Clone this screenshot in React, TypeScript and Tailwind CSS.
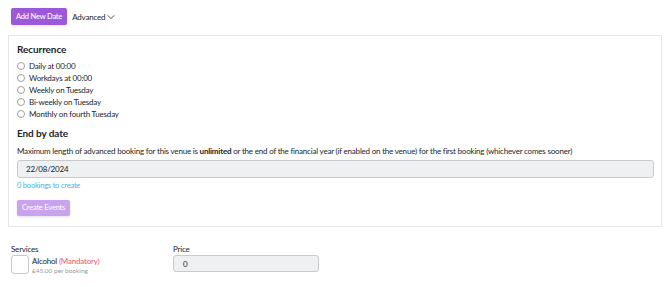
import React from "react";

const options = [
  "Daily at 00:00",
  "Workdays at 00:00",
  "Weekly on Tuesday",
  "Bi-weekly on Tuesday",
  "Monthly on fourth Tuesday",
];

export default function App() {
  return (
    <div className="w-[670px] h-[287px] bg-white text-[#212529] text-[8px] tracking-[-0.2px] overflow-hidden" style={{ fontFamily: "Lato, 'Liberation Sans', sans-serif" }}>
      {/* top bar */}
      <div className="flex items-center gap-[5px] pl-[11px] pt-[8px] h-[25px]">
        <button className="h-[17px] px-[5px] rounded-[2px] bg-[#9b59d9] text-white text-[7.5px] font-medium shadow-sm">
          Add New Date
        </button>
        <span className="flex items-center gap-[2px]">
          Advanced
          <svg width="8" height="6" viewBox="0 0 8 6" fill="none" stroke="#444" strokeWidth="0.9">
            <path d="M0.5 1.2 L4 4.6 L7.5 1.2" />
          </svg>
        </span>
      </div>

      {/* recurrence panel */}
      <div className="mt-[10px] ml-[8px] w-[654px] h-[192px] border border-[#e6e6e6] px-[8px] pt-[7px]">
        <h3 className="text-[10px] font-bold leading-[13px] mb-[4px] tracking-[-0.1px]">Recurrence</h3>
        <div className="flex flex-col">
          {options.map((o) => (
            <label key={o} className="flex items-center gap-[4px] h-[12px]">
              <span className="w-[8px] h-[8px] rounded-full border border-[#a0a0a0] bg-white" />
              <span>{o}</span>
            </label>
          ))}
        </div>
        <h3 className="text-[10px] font-bold leading-[13px] mt-[7px] tracking-[-0.1px]">End by date</h3>
        <p className="mt-[6px] leading-[11px]">
          Maximum length of advanced booking for this venue is <b>unlimited</b> or the end of the financial year (if enabled on the venue) for the first booking (whichever comes sooner)
        </p>
        <div className="mt-[3px] w-[637px] h-[18px] rounded-[3px] border border-[#c8cbcd] bg-[#eef0f1] flex items-center pl-[8px]">
          22/08/2024
        </div>
        <div className="text-[#3fb6ee] text-[7.5px] mt-[3px] leading-[10px]">0 bookings to create</div>
        <button className="mt-[9px] h-[16px] px-[5px] rounded-[2px] bg-[#c9a3ee] text-white text-[7.5px] shadow-sm">
          Create Events
        </button>
      </div>

      {/* services row */}
      <div className="flex pl-[11px] mt-[17px]">
        <div className="w-[162px]">
          <div className="leading-[10px]">Services</div>
          <div className="flex gap-[3px] mt-[1px]">
            <span className="w-[18px] h-[19px] rounded-[3px] border border-[#c8c8c8] bg-white" />
            <div className="pt-[1px]">
              <div className="leading-[10px]">
                Alcohol <span className="text-[#f0566b]">(Mandatory)</span>
              </div>
              <div className="text-[6.5px] text-[#9a9a9a] leading-[9px] tracking-normal">£45.00 per booking</div>
            </div>
          </div>
        </div>
        <div>
          <div className="leading-[10px]">Price</div>
          <div className="mt-[1px] w-[146px] h-[17px] rounded-[3px] border border-[#c8cbcd] bg-[#eef0f1] flex items-center pl-[9px]">
            0
          </div>
        </div>
      </div>
    </div>
  );
}
